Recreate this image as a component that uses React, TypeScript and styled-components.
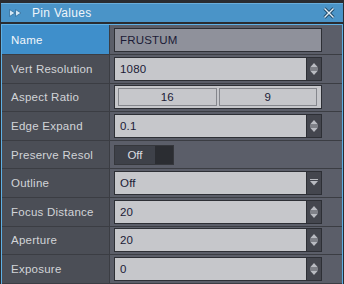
import React from "react";
import styled, { createGlobalStyle } from "styled-components";

const Global = createGlobalStyle`
  html, body { margin: 0; padding: 0; background: #2a2c30; }
  body { font-family: "Liberation Sans", Arial, sans-serif; font-size: 11px; }
`;

const Window = styled.div`
  width: 344px;
  height: 284px;
  overflow: hidden;
  padding-top: 3px;
  box-sizing: border-box;
  background: #2a2c30;
`;

const TitleBar = styled.div`
  height: 19px;
  margin: 0 1px;
  background: #4a94c8;
  border-top: 1px solid #6aaedb;
  box-sizing: border-box;
  display: flex;
  align-items: center;
  padding-left: 8px;
  padding-right: 8px;
  color: #eef4fa;
  font-size: 12px;
`;

const Title = styled.span`
  margin-left: 10px;
  flex: 1;
  letter-spacing: 0.3px;
`;

const Panel = styled.div`
  margin: 2px 1px 0 1px;
  border: 1px solid #5eb0e5;
  border-bottom: none;
  background: #5b5e69;
`;

const Row = styled.div<{ $first?: boolean }>`
  display: grid;
  grid-template-columns: 108px 1fr;
  height: ${(p) => (p.$first ? "30px" : "28.6px")};
  border-bottom: 1px solid #3b3d43;
  box-sizing: border-box;
`;

const Label = styled.div<{ $selected?: boolean }>`
  background: ${(p) => (p.$selected ? "#3f8fcb" : "#4b4e56")};
  color: ${(p) => (p.$selected ? "#f2f6fa" : "#d2d4d8")};
  border-right: 1px solid #3b3d43;
  display: flex;
  align-items: center;
  padding-left: 9px;
  font-size: 11.5px;
  letter-spacing: 0.25px;
  white-space: nowrap;
  overflow: hidden;
`;

const Value = styled.div`
  display: flex;
  align-items: center;
  padding-left: 4px;
  padding-right: 20px;
`;

const Field = styled.div<{ $disabled?: boolean }>`
  flex: 1;
  height: 24px;
  box-sizing: border-box;
  display: flex;
  align-items: stretch;
  border: 1px solid #2d2f35;
  background: ${(p) => (p.$disabled ? "#8f919b" : "#c6c7cb")};
`;

const FieldText = styled.div`
  flex: 1;
  display: flex;
  align-items: center;
  padding-left: 5px;
  color: #1b1b36;
  font-size: 11.5px;
  letter-spacing: 0.2px;
`;

const SideButton = styled.div`
  width: 14px;
  background: #44464e;
  border-left: 1px solid #2d2f35;
  display: flex;
  align-items: center;
  justify-content: center;
`;

const Pair = styled.div`
  flex: 1;
  height: 24px;
  box-sizing: border-box;
  border: 1px solid #2d2f35;
  background: #c6c7cb;
  display: flex;
  gap: 2px;
  padding: 2px 4px 2px 3px;
`;

const PairCell = styled.div`
  flex: 1;
  border: 1px solid #85878d;
  display: flex;
  align-items: center;
  justify-content: center;
  color: #1b1b36;
  font-size: 11.5px;
`;

const Toggle = styled.div`
  width: 60px;
  height: 20px;
  box-sizing: border-box;
  display: flex;
  border: 1px solid #35373c;
`;

const ToggleOn = styled.div`
  width: 40px;
  background: #3e4149;
  color: #dcdde0;
  display: flex;
  align-items: center;
  justify-content: center;
  font-size: 11.5px;
`;

const ToggleOff = styled.div`
  flex: 1;
  background: #2b2d32;
`;

const Spin = () => (
  <svg width="10" height="14" viewBox="0 0 10 14">
    <path d="M5 1 L9 5.5 L1 5.5 Z" fill="#b9bbc1" />
    <rect x="1" y="6.5" width="8" height="1" fill="#b9bbc1" />
    <path d="M1 8.5 L9 8.5 L5 13 Z" fill="#b9bbc1" />
  </svg>
);

const Drop = () => (
  <svg width="10" height="10" viewBox="0 0 10 10">
    <rect x="1" y="1" width="8" height="1" fill="#b9bbc1" />
    <path d="M1 3 L9 3 L5 7.5 Z" fill="#b9bbc1" />
  </svg>
);

const NumberField = ({ v }: { v: string }) => (
  <Field>
    <FieldText>{v}</FieldText>
    <SideButton>
      <Spin />
    </SideButton>
  </Field>
);

export default function App() {
  return (
    <>
      <Global />
      <Window>
        <TitleBar>
          <svg width="13" height="8" viewBox="0 0 13 8">
            <path d="M0.5 0.5 L6 4 L0.5 7.5 Z" fill="#d4e7f5" stroke="#2f6d9c" strokeWidth="0.8" />
            <path d="M6.5 0.5 L12 4 L6.5 7.5 Z" fill="#d4e7f5" stroke="#2f6d9c" strokeWidth="0.8" />
          </svg>
          <Title>Pin Values</Title>
          <svg width="12" height="12" viewBox="0 0 12 12">
            <path d="M1.5 1.5 L10.5 10.5 M10.5 1.5 L1.5 10.5" stroke="#1f4a6a" strokeWidth="3.2" />
            <path d="M1.5 1.5 L10.5 10.5 M10.5 1.5 L1.5 10.5" stroke="#e4eef6" strokeWidth="1.4" />
          </svg>
        </TitleBar>
        <Panel>
          <Row $first>
            <Label $selected>Name</Label>
            <Value>
              <Field $disabled>
                <FieldText>FRUSTUM</FieldText>
              </Field>
            </Value>
          </Row>
          <Row>
            <Label>Vert Resolution</Label>
            <Value>
              <NumberField v="1080" />
            </Value>
          </Row>
          <Row>
            <Label>Aspect Ratio</Label>
            <Value>
              <Pair>
                <PairCell>16</PairCell>
                <PairCell>9</PairCell>
              </Pair>
            </Value>
          </Row>
          <Row>
            <Label>Edge Expand</Label>
            <Value>
              <NumberField v="0.1" />
            </Value>
          </Row>
          <Row>
            <Label>Preserve Resol</Label>
            <Value>
              <Toggle>
                <ToggleOn>Off</ToggleOn>
                <ToggleOff />
              </Toggle>
            </Value>
          </Row>
          <Row>
            <Label>Outline</Label>
            <Value>
              <Field>
                <FieldText>Off</FieldText>
                <SideButton>
                  <Drop />
                </SideButton>
              </Field>
            </Value>
          </Row>
          <Row>
            <Label>Focus Distance</Label>
            <Value>
              <NumberField v="20" />
            </Value>
          </Row>
          <Row>
            <Label>Aperture</Label>
            <Value>
              <NumberField v="20" />
            </Value>
          </Row>
          <Row>
            <Label>Exposure</Label>
            <Value>
              <NumberField v="0" />
            </Value>
          </Row>
        </Panel>
      </Window>
    </>
  );
}
